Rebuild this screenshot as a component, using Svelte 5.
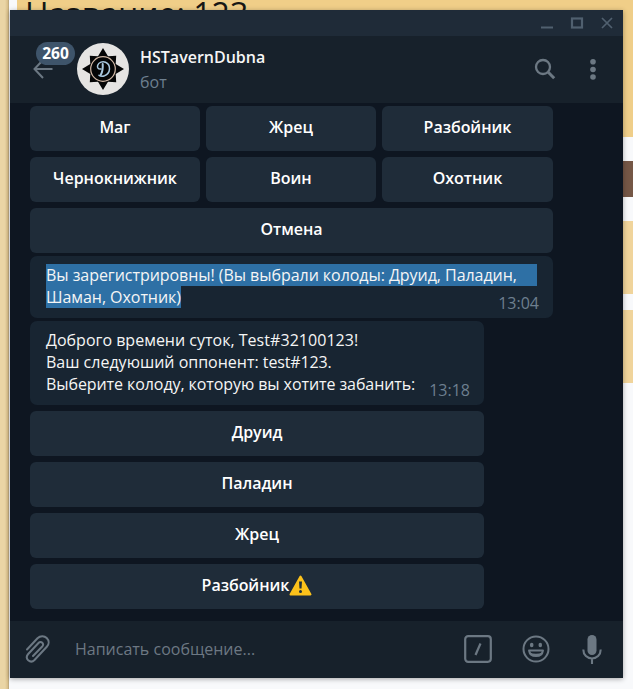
<script>
  const rows = [['Маг', 'Жрец', 'Разбойник'], ['Чернокнижник', 'Воин', 'Охотник'], ['Отмена']];
  const bans = ['Друид', 'Паладин', 'Жрец', 'Разбойник'];
</script>

<div class="desktop">
  <div class="strip"></div>
  <div class="page">
    <div class="heading">Название: 123</div>
    <div class="side"><i class="gold"></i><i class="brown"></i><i class="sand one"></i><i class="sand two"></i></div>
  </div>
  <main class="window">
    <div class="titlebar">
      <svg width="88" height="26" viewBox="0 0 88 26" fill="none" stroke="#50606f">
        <path d="M6 17.500h12" stroke-width="2" />
        <rect x="37" y="8.500" width="10" height="9" stroke-width="2.200" />
        <path d="M67 8l10 10M77 8L67 18" stroke-width="1.700" />
      </svg>
    </div>
    <header>
      <div class="back">
        <svg width="22" height="22" viewBox="0 0 22 22" fill="none" stroke="#6c7883" stroke-width="2"><path d="M11 2L2.500 11l8.500 9M2.500 11h18" /></svg>
        <span class="badge">260</span>
      </div>
      <svg class="avatar" width="52" height="52" viewBox="0 0 52 52">
        <circle cx="26" cy="26" r="26" fill="#e5e4e2" />
        <path fill="#050606" d="M26 5l5 8.300 8.200-.5-.5 8.200L47 26l-8.300 5 .5 8.200-8.200-.5L26 47l-5-8.300-8.200.5.5-8.200L5 26l8.300-5-.5-8.200 8.200.5z" />
        <circle cx="26" cy="26" r="12.300" fill="#050606" stroke="#d2b9a6" stroke-width="1.200" />
        <g fill="none" stroke="#a9c8de" stroke-linecap="round">
          <path stroke-width="1.500" d="M24 26c-3 .5-4-1.500-3.300-3.800 1-3 5-4.200 7.800-3 5.500 2.300 5.500 11-1 13.600-2 .7-4.500.2-5.500-.5" />
          <path stroke-width="2" d="M25.700 21c.3 4-.2 8-2 11" />
        </g>
      </svg>
      <div class="who"><strong>HSTavernDubna</strong><span>бот</span></div>
      <svg class="search" width="22" height="22" viewBox="0 0 22 22" fill="none" stroke="#6c7883"><circle cx="9" cy="9" r="7" stroke-width="2.300" /><path d="M14 14l6.200 6.200" stroke-width="3" /></svg>
      <svg class="dots" width="8" height="22" viewBox="0 0 8 22" fill="#6c7883"><circle cx="4" cy="3.800" r="2.800" /><circle cx="4" cy="11.500" r="2.800" /><circle cx="4" cy="19" r="2.800" /></svg>
    </header>
    <section class="chat">
      <div class="keyboard wide">
        {#each rows as row}
          <div class="row">{#each row as label}<button>{label}</button>{/each}</div>
        {/each}
      </div>
      <article class="bubble first">
        <p><mark class="full">Вы зарегистрировны! (Вы выбрали колоды: Друид, Паладин,</mark><mark>Шаман, Охотник)</mark></p>
        <time>13:04</time>
      </article>
      <article class="bubble second">
        <p>Доброго времени суток, <span class="tag">Test#32100123!</span><br />Ваш следуюший оппонент: <span class="opponent">test#123.</span><br /><span class="ask">Выберите колоду, которую вы хотите забанить:</span></p>
        <time>13:18</time>
      </article>
      <div class="keyboard narrow">
        {#each bans as label, i}
          <button>{label}{#if i === 3}<svg width="23" height="21" viewBox="0 0 23 21"><path d="M11.500 1.500L21.500 19.500h-20z" fill="#fcc21b" stroke="#fcc21b" stroke-width="2" stroke-linejoin="round" /><path d="M10 6.500h3l-.5 7h-2z" fill="#22303a" /><circle cx="11.500" cy="16.500" r="1.500" fill="#22303a" /></svg>{/if}</button>
        {/each}
      </div>
    </section>
    <footer>
      <svg class="clip" width="28" height="30" viewBox="0 0 28 30" fill="none" stroke="#6c7883" stroke-width="2" stroke-linecap="round" stroke-linejoin="round">
        <path d="M3 15.500L13.500 4.300c3-3 7-2.500 9.200-.3 2.600 2.600 2.500 6.200.1 8.800L10.500 26c-2 2-4.500 1.800-6.300.2-1.800-1.800-1.800-4.200 0-6.200L14.500 9c1.200-1.300 2.800-1.200 3.800-.2 1.100 1.100 1 2.500-.1 3.700L9 22" />
      </svg>
      <span class="placeholder">Написать сообщение...</span>
      <svg class="slash" width="28" height="28" viewBox="0 0 28 28" fill="none" stroke="#6c7883"><rect x="1.200" y="1.200" width="25.600" height="25.600" rx="3" stroke-width="2.200" /><path d="M16.500 8.500l-5 11.500" stroke-width="2.200" /></svg>
      <svg class="smile" width="28" height="28" viewBox="0 0 28 28" fill="none" stroke="#6c7883"><circle cx="14" cy="14" r="12.500" stroke-width="2" /><g fill="#6c7883" stroke="none"><ellipse cx="9.700" cy="10" rx="1.800" ry="2.300" /><ellipse cx="18.300" cy="10" rx="1.800" ry="2.300" /></g><path d="M7 15.500h14c-.5 3.500-3.500 5.500-7 5.500s-6.500-2-7-5.500z" stroke-width="1.900" stroke-linejoin="round" /><path d="M8 18.500c3 1.200 9 1.200 12 0" stroke-width="1.500" /></svg>
      <svg class="mic" width="20" height="29" viewBox="0 0 20 29" fill="#6c7883"><rect x="5.500" y="0" width="9" height="20" rx="4.500" /><path d="M1.300 14.500c0 5.500 4 9 8.700 9s8.700-3.500 8.700-9M10 23v6" fill="none" stroke="#6c7883" stroke-width="2.100" /></svg>
    </footer>
  </main>
</div>

<style>
  :global(body) { margin: 0; }
  .desktop { position: relative; display: flex; width: 633px; height: 689px; overflow: hidden; background: #f8f9fb; font-family: "Open Sans", "Noto Sans", sans-serif; }
  .strip { width: 9px; flex: none; background: linear-gradient(90deg, #ead5a5 0 5px, #d7bd87 8px, #a99a79); }
  .page { flex: 1; margin-left: 8px; display: flex; flex-direction: column; align-items: flex-end; }
  .heading { box-sizing: border-box; align-self: stretch; height: 10px; flex: none; padding-left: 8px; background: #f0ce88; color: #171715; font-size: 32px; line-height: 27px; white-space: nowrap; }
  .side { width: 10px; flex: 1; display: flex; flex-direction: column; }
  .side i { flex: none; }
  .gold { height: 127px; background: #efce89; }
  .brown { height: 36px; margin: 24px 0; background: #755746; }
  .sand { background: #f0d49b; }
  .one { height: 73px; }
  .two { height: 73px; margin-top: 16px; }
  .window { position: absolute; left: 10px; top: 10px; width: 613px; height: 668px; display: flex; flex-direction: column; background: #0e1621; box-shadow: 0 1px 5px #0005; }
  .titlebar { height: 26px; display: flex; justify-content: flex-end; background: #1f2b38; }
  header { height: 67px; flex: none; display: flex; align-items: flex-start; background: #17212b; }
  .back { position: relative; width: 67px; flex: none; }
  .back svg { display: block; margin: 22px 0 0 22px; }
  .badge { position: absolute; left: 26px; top: 6px; width: 39px; height: 23px; border-radius: 12px; background: #3e546a; color: #fff; font: 700 15.500px/23px "Open Sans", sans-serif; text-align: center; }
  .avatar { margin-top: 7px; flex: none; }
  .who { margin: 10px 0 0 11px; width: 394px; display: flex; flex-direction: column; font-size: 16px; line-height: 22px; }
  .who strong { color: #f5f5f5; font-weight: 600; }
  .who span { color: #6d7f8f; margin-top: 3px; }
  .search { margin-top: 22px; }
  .dots { margin: 22px 0 0 33px; }
  .chat { box-sizing: border-box; flex: 1; padding: 3px 0 0 20px; display: flex; flex-direction: column; align-items: flex-start; }
  .keyboard { display: flex; flex-direction: column; gap: 6px; }
  .wide { width: 523px; }
  .narrow { width: 454px; margin-top: 6px; }
  .row { display: grid; grid-template-columns: 170px 170px 171px; gap: 6px; }
  .row button:only-child { grid-column: 1 / -1; }
  button { box-sizing: border-box; height: 45px; margin: 0; padding: 0 0 3px; border: 0; border-radius: 6px; background: #1f2c39; color: #fff; font: 600 16px/22px "Open Sans", "Noto Sans", sans-serif; letter-spacing: -.03px; display: flex; align-items: center; justify-content: center; }
  .bubble { box-sizing: border-box; position: relative; border-radius: 7px; background: #182532; color: #f5f5f5; font-size: 16px; line-height: 22px; padding: 8px 16px; margin-top: 3px; white-space: nowrap; }
  .first { width: 523px; height: 62px; }
  .second { width: 454px; height: 84px; }
  p { margin: 0; }
  mark { display: block; width: max-content; background: #2e70a5; color: inherit; letter-spacing: -.05px; }
  .full { width: 491px; }
  .tag { letter-spacing: .05px; }
  .opponent { letter-spacing: -.15px; }
  .ask { letter-spacing: -.08px; }
  time { position: absolute; right: 14px; bottom: 4px; color: #6d7f8f; }
  footer { height: 57px; flex: none; display: flex; align-items: center; background: #17212b; }
  .clip { margin-left: 14px; }
  .placeholder { margin: 0 0 2px 23px; width: 389px; color: #6d7883; font-size: 16px; }
  .slash, .smile, .clip, .mic { margin-bottom: 1px; }
  .smile { margin-left: 30px; }
  .mic { margin-left: 32px; }
</style>
